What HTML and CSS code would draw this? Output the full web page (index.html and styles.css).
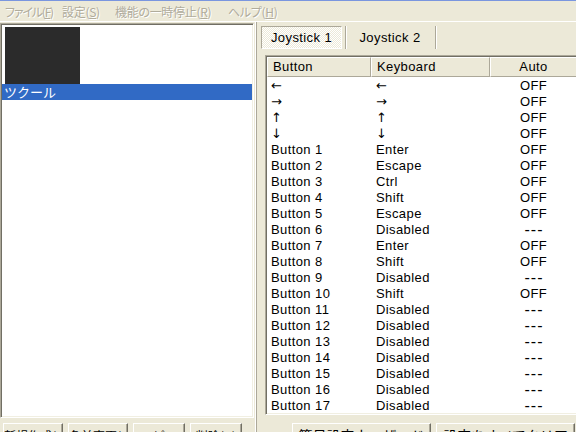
FILE: index.html
```html
<!DOCTYPE html>
<html lang="ja">
<head>
    <meta charset="UTF-8">
    <meta name="viewport" content="width=device-width, initial-scale=1.0">
    <title>JoyToKey</title>
    <link rel="stylesheet" href="styles.css">
</head>
<body>

    <div class="window">
        <div class="menubar">
            <span class="menu-item menu-file">ファイル(<u>F</u>)</span>
            <span class="menu-item menu-settings">設定(<u>S</u>)</span>
            <span class="menu-item menu-pause">機能の一時停止(<u>R</u>)</span>
            <span class="menu-item">ヘルプ(<u>H</u>)</span>
        </div>

        <div class="main">
            <!-- 設定ファイル一覧 -->
            <div class="left-pane">
                <div class="listbox">
                    <div class="hidden-items"></div>
                    <div class="list-item selected">ツクール</div>
                </div>
                <div class="button-row">
                    <button class="btn btn-wide">新規作成(N)</button>
                    <button class="btn btn-wide">名前変更(M)</button>
                    <button class="btn">コピー</button>
                    <button class="btn">削除(D)</button>
                </div>
            </div>

            <div class="splitter"></div>

            <!-- ジョイスティック設定 -->
            <div class="right-pane">
                <div class="tabs">
                    <div class="tab tab-first active">Joystick 1</div>
                    <div class="tab-sep"></div>
                    <div class="tab tab-second">Joystick 2</div>
                    <div class="tab-sep"></div>
                </div>

                <div class="listview">
                    <table>
                        <colgroup>
                            <col class="col-button">
                            <col class="col-key">
                            <col class="col-auto">
                        </colgroup>
                        <thead>
                            <tr><th>Button</th><th>Keyboard</th><th class="auto">Auto</th></tr>
                        </thead>
                        <tbody>
                            <tr><td class="arrow">←</td><td class="arrow">←</td><td class="auto">OFF</td></tr>
                            <tr><td class="arrow">→</td><td class="arrow">→</td><td class="auto">OFF</td></tr>
                            <tr><td class="arrow">↑&#xFE0E;</td><td class="arrow">↑&#xFE0E;</td><td class="auto">OFF</td></tr>
                            <tr><td class="arrow">↓&#xFE0E;</td><td class="arrow">↓&#xFE0E;</td><td class="auto">OFF</td></tr>
                            <tr><td>Button 1</td><td>Enter</td><td class="auto">OFF</td></tr>
                            <tr><td>Button 2</td><td>Escape</td><td class="auto">OFF</td></tr>
                            <tr><td>Button 3</td><td>Ctrl</td><td class="auto">OFF</td></tr>
                            <tr><td>Button 4</td><td>Shift</td><td class="auto">OFF</td></tr>
                            <tr><td>Button 5</td><td>Escape</td><td class="auto">OFF</td></tr>
                            <tr><td>Button 6</td><td>Disabled</td><td class="auto none">---</td></tr>
                            <tr><td>Button 7</td><td>Enter</td><td class="auto">OFF</td></tr>
                            <tr><td>Button 8</td><td>Shift</td><td class="auto">OFF</td></tr>
                            <tr><td>Button 9</td><td>Disabled</td><td class="auto none">---</td></tr>
                            <tr><td>Button 10</td><td>Shift</td><td class="auto">OFF</td></tr>
                            <tr><td>Button 11</td><td>Disabled</td><td class="auto none">---</td></tr>
                            <tr><td>Button 12</td><td>Disabled</td><td class="auto none">---</td></tr>
                            <tr><td>Button 13</td><td>Disabled</td><td class="auto none">---</td></tr>
                            <tr><td>Button 14</td><td>Disabled</td><td class="auto none">---</td></tr>
                            <tr><td>Button 15</td><td>Disabled</td><td class="auto none">---</td></tr>
                            <tr><td>Button 16</td><td>Disabled</td><td class="auto none">---</td></tr>
                            <tr><td>Button 17</td><td>Disabled</td><td class="auto none">---</td></tr>
                        </tbody>
                    </table>
                </div>

                <div class="wizard-row">
                    <button class="btn btn-large">簡易設定ウィザード</button>
                    <button class="btn btn-large">設定をすべてクリア</button>
                </div>
            </div>
        </div>
    </div>

</body>
</html>
```

FILE: styles.css
```css
* {
    box-sizing: border-box;
}
body {
    margin: 0;
    width: 576px;
    height: 432px;
    overflow: hidden;
    background-color: #ece9d8;
    font-family: "Liberation Sans", "Noto Sans CJK JP", sans-serif;
    font-size: 13px;
    color: #000;
}
.window {
    height: 432px;
    border-top: 1px solid #7a96df;
    display: flex;
    flex-direction: column;
}

/* メニューバー */
.menubar {
    height: 21px;
    flex: none;
    border-bottom: 1px solid #fff;
    display: flex;
    align-items: center;
    padding-left: 5px;
    font-family: "Noto Sans CJK JP", sans-serif;
    font-size: 12px;
    font-feature-settings: "palt";
    letter-spacing: -0.3px;
    color: #b0ac9c;
    text-shadow: 1px 1px 0 #fff;
    white-space: nowrap;
}
.menu-file {
    width: 57px;
    letter-spacing: -1.2px;
}
.menu-settings {
    width: 53px;
}
.menu-pause {
    width: 113px;
}
.menu-item u {
    text-decoration-thickness: 1px;
}

.main {
    flex: 1;
    min-height: 0;
    display: flex;
}

/* 左側 */
.left-pane {
    width: 254px;
    flex: none;
    padding-top: 1px;
}
.listbox {
    height: 395px;
    background-color: #fff;
    border: 1px solid;
    border-color: #aca899 #fff #fff #aca899;
    box-shadow: inset 1px 1px #716f64, inset -1px -1px #f1efe2;
    padding: 1px;
}
.hidden-items {
    width: 75px;
    height: 57px;
    margin: 2px 0 0 3px;
    background-color: #2b2b2b;
}
.list-item {
    height: 16px;
    line-height: 16px;
    padding-left: 2px;
    font-family: "Noto Sans CJK JP", sans-serif;
    font-size: 13px;
}
.list-item.selected {
    background-color: #316ac5;
    color: #fff;
}

.btn {
    height: 23px;
    flex: none;
    padding: 0;
    background-color: #ece9d8;
    border: 1px solid;
    border-color: #fff #716f64 #716f64 #fff;
    box-shadow: inset -1px -1px #aca899;
    font-family: "Noto Sans CJK JP", sans-serif;
    font-size: 12px;
    color: #000;
    white-space: nowrap;
    overflow: hidden;
}
.button-row {
    display: flex;
    gap: 5px;
    padding-left: 3px;
    margin-top: 5px;
}
.button-row .btn {
    width: 52px;
    padding-top: 3px;
    line-height: 12px;
}
.button-row .btn-wide {
    width: 60px;
}

.splitter {
    flex: none;
    width: 2px;
    margin: 0 1px;
    border-left: 1px solid #fff;
    border-right: 1px solid #aca899;
}

/* 右側 */
.right-pane {
    flex: 1;
    min-width: 0;
    padding: 4px 0 0 3px;
}
.tabs {
    display: flex;
    height: 23px;
}
.tab {
    height: 23px;
    line-height: 21px;
    text-align: center;
    border: 1px solid transparent;
    letter-spacing: 0.4px;
}
.tab-first {
    width: 81px;
}
.tab-second {
    width: 84px;
}
.tab.active {
    border-color: #aca899 #fff #fff #aca899;
    background: repeating-conic-gradient(#fff 0 25%, #ece9d8 0 50%) 0 0 / 2px 2px;
}
.tab-sep {
    width: 2px;
    height: 23px;
    margin: 0 1px 0 3px;
    border-left: 1px solid #aca899;
    border-right: 1px solid #fff;
}

.listview {
    width: 314px;
    height: 360px;
    margin: 6px 0 0 4px;
    background-color: #fff;
    border: 1px solid;
    border-color: #aca899 #fff #fff #aca899;
    box-shadow: inset 1px 1px #716f64, inset -1px -1px #f1efe2;
    padding: 1px;
    overflow: hidden;
}
.listview table {
    width: 310px;
    table-layout: fixed;
    border-spacing: 0;
}
.col-button {
    width: 104px;
}
.col-key {
    width: 119px;
}
.col-auto {
    width: 87px;
}
.listview th {
    font-weight: normal;
    text-align: left;
    line-height: 18px;
    padding: 0 0 0 5px;
    background-color: #ece9d8;
    border-top: 1px solid #fff;
    border-left: 1px solid #fff;
    border-right: 1px solid #aca899;
    border-bottom: 1px solid #aca899;
    letter-spacing: 0.4px;
    white-space: nowrap;
}
.listview td {
    height: 16px;
    line-height: 15px;
    padding: 1px 0 0 4px;
    letter-spacing: 0.4px;
    white-space: nowrap;
}
.listview td:nth-child(2) {
    padding-left: 5px;
}
.listview td.arrow {
    font-family: "DejaVu Sans", sans-serif;
    font-size: 13px;
}
.listview .auto {
    text-align: center;
    padding-left: 0;
}
.listview td.none {
    font-size: 16px;
    letter-spacing: 1px;
    padding-left: 1px;
}

.wizard-row {
    display: flex;
    gap: 5px;
    padding-left: 31px;
    margin-top: 8px;
}
.btn-large {
    width: 139px;
    font-size: 14px;
}
```
